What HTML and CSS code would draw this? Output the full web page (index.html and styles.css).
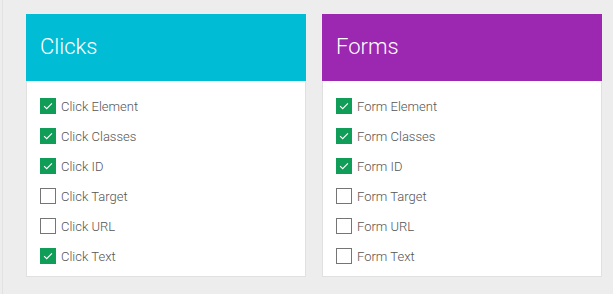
FILE: index.html
```html
<!DOCTYPE html>
<html lang="en">
<head>
  <meta charset="UTF-8">
  <title>Variables</title>
  <link rel="stylesheet" href="styles.css">
</head>
<body>
  <div class="page">
    <div class="card">
      <div class="card-head clicks">Clicks</div>
      <ul class="options">
        <li><span class="box on"><svg viewBox="0 0 16 16"><path d="M3.5 8.2l3 2.8 6-6"/></svg></span>Click Element</li>
        <li><span class="box on"><svg viewBox="0 0 16 16"><path d="M3.5 8.2l3 2.8 6-6"/></svg></span>Click Classes</li>
        <li><span class="box on"><svg viewBox="0 0 16 16"><path d="M3.5 8.2l3 2.8 6-6"/></svg></span>Click ID</li>
        <li><span class="box"></span>Click Target</li>
        <li><span class="box"></span>Click URL</li>
        <li><span class="box on"><svg viewBox="0 0 16 16"><path d="M3.5 8.2l3 2.8 6-6"/></svg></span>Click Text</li>
      </ul>
    </div>

    <div class="card">
      <div class="card-head forms">Forms</div>
      <ul class="options">
        <li><span class="box on"><svg viewBox="0 0 16 16"><path d="M3.5 8.2l3 2.8 6-6"/></svg></span>Form Element</li>
        <li><span class="box on"><svg viewBox="0 0 16 16"><path d="M3.5 8.2l3 2.8 6-6"/></svg></span>Form Classes</li>
        <li><span class="box on"><svg viewBox="0 0 16 16"><path d="M3.5 8.2l3 2.8 6-6"/></svg></span>Form ID</li>
        <li><span class="box"></span>Form Target</li>
        <li><span class="box"></span>Form URL</li>
        <li><span class="box"></span>Form Text</li>
      </ul>
    </div>
  </div>
</body>
</html>
```

FILE: styles.css
```css
html, body {
  margin: 0;
  height: 100%;
  background-color: #ededed;
}

body {
  font-family: Roboto, "Liberation Sans", sans-serif;
  color: #666;
}

.page {
  display: flex;
  gap: 16px;
  align-items: flex-start;
  margin-left: 2px;
  min-height: 100%;
  box-sizing: border-box;
  border-left: 1px solid #e2e2e2;
  padding: 14px 0 0 23px;
}

.card {
  width: 280px;
  background-color: #fff;
  border: 1px solid #e0e0e0;
  border-top: none;
  box-sizing: border-box;
}

.card-head {
  height: 67px;
  box-sizing: border-box;
  padding: 20px 0 0 14px;
  font-size: 22px;
  font-weight: 300;
  line-height: 26px;
  color: #fff;
}

.clicks {
  background-color: #00bcd4;
}

.forms {
  background-color: #9c27b0;
}

.card .card-head {
  margin: 0 -1px;
}

.options {
  list-style: none;
  margin: 0;
  padding: 17px 0 12px 13px;
}

.options li {
  display: flex;
  align-items: center;
  height: 16px;
  margin-bottom: 14px;
  font-size: 13px;
  font-weight: 300;
  color: #555;
}

.options li:last-child {
  margin-bottom: 0;
}

.box {
  width: 16px;
  height: 16px;
  box-sizing: border-box;
  border: 1px solid #757575;
  margin-right: 5px;
  flex-shrink: 0;
}

.box.on {
  background-color: #0f9d58;
  border-color: #0f9d58;
}

.box svg {
  display: block;
  width: 14px;
  height: 14px;
  fill: none;
  stroke: #fff;
  stroke-width: 1.3;
}
```
